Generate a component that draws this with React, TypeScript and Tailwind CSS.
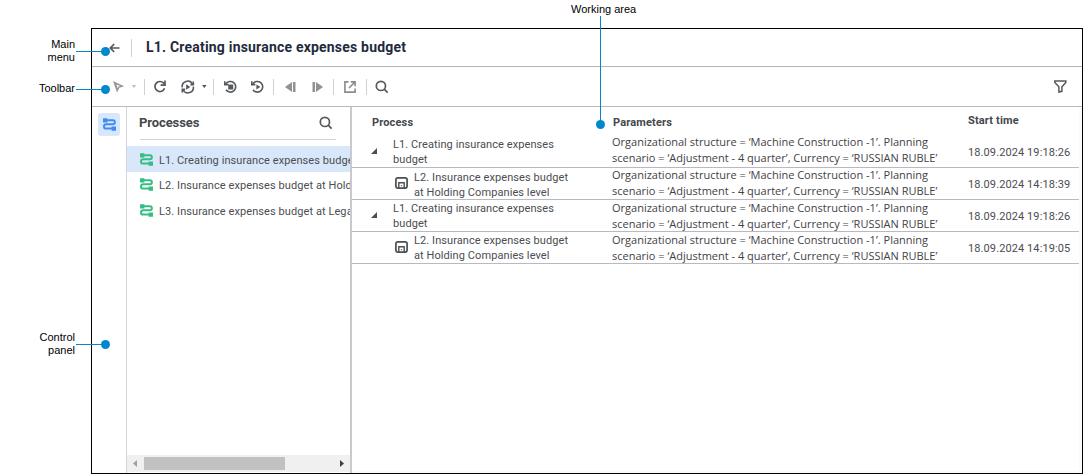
import React from "react";
import clsx from "clsx";

const PARAMS = [
  "Organizational structure = ‘Machine Construction -1’. Planning",
  "scenario = ‘Adjustment - 4 quarter’, Currency = ‘RUSSIAN RUBLE’",
];

const processes = [
  "L1. Creating insurance expenses budget",
  "L2. Insurance expenses budget at Holding Companies level",
  "L3. Insurance expenses budget at Legal Entities level",
];

const rows = [
  {
    lines: ["L1. Creating insurance expenses", "budget"],
    start: "18.09.2024 19:18:26",
    child: false,
    nameShift: "",
    paramShift: "-mt-[4px]",
  },
  {
    lines: ["L2. Insurance expenses budget", "at Holding Companies level"],
    start: "18.09.2024 14:18:39",
    child: true,
    nameShift: "mt-[2px]",
    paramShift: "-mt-[2px]",
  },
  {
    lines: ["L1. Creating insurance expenses", "budget"],
    start: "18.09.2024 19:18:26",
    child: false,
    nameShift: "",
    paramShift: "",
  },
  {
    lines: ["L2. Insurance expenses budget", "at Holding Companies level"],
    start: "18.09.2024 14:19:05",
    child: true,
    nameShift: "",
    paramShift: "",
  },
];

const SearchIcon = () => (
  <svg width="14" height="14" viewBox="0 0 14 14" fill="none" stroke="#55585c" strokeWidth="1.7">
    <circle cx="5.9" cy="5.9" r="4.6" />
    <path d="M9.2 9.2 12.6 12.6" />
  </svg>
);

const FlowIcon = ({ className }: { className?: string }) => (
  <svg className={className} width="13" height="13" viewBox="0 0 13 13" fill="none">
    <path d="M0 0.2h4.4v4.2H0zM8.6 8.6H13v4.2H8.6z" fill="currentColor" />
    <path
      d="M4 2.3h5.9a1.9 1.9 0 0 1 0 3.9H3.2a2.2 2.2 0 0 0 0 4.4H9"
      stroke="currentColor"
      strokeWidth="2"
    />
  </svg>
);

const ProcessItemIcon = () => (
  <svg className="mb-[2px] shrink-0" width="13" height="12" viewBox="0 0 13 12" fill="none" stroke="#4c4f52" strokeWidth="1.7">
    <rect x="0.9" y="0.9" width="11.2" height="10.2" rx="2" />
    <path d="M3.8 11V5.7h5.4V11" strokeWidth="1.4" />
    <path d="M5.9 8.7h1.2" strokeWidth="1" />
  </svg>
);

const Separator = () => <div className="h-4 w-px shrink-0 bg-[#cfd1d8]" />;

const Toolbar = () => (
  <div className="flex h-10 shrink-0 items-center border-b border-[#b9bac0] text-[#55585c]">
    <svg className="ml-[21px]" width="12" height="12" viewBox="0 0 12 12" fill="#96989c">
      <path fillRule="evenodd" d="M0 0 11.3 5.2 6.4 6.7 4 11.5zM3.6 3.6l1 3.6 .9-1.8 1.8-.5z" />
    </svg>
    <svg className="ml-[7px]" width="4" height="3" viewBox="0 0 4 3" fill="#b8babd">
      <path d="M0 0h4L2 3z" />
    </svg>
    <div className="ml-[8px] flex items-center">
      <Separator />
      <svg className="ml-[8px]" width="14" height="13" viewBox="0 0 14 13" fill="none" stroke="currentColor" strokeWidth="1.7">
        <path d="M11.6 8.3A5 5 0 1 1 10.6 3.1L11.4 4" />
        <path d="M12 .6v4.6H7.6" />
      </svg>
      <svg className="ml-[14px]" width="14" height="14" viewBox="0 0 14 14" fill="none" stroke="currentColor" strokeWidth="1.6">
        <path d="M1.3 7.4A5.4 5.4 0 0 1 11.4 4M12.3 6.6A5.4 5.4 0 0 1 2.2 10" />
        <path d="M12.3 1.6v3H9.4M1.3 12.4v-3h2.9" />
        <path d="M5.2 4.3 9.3 7l-4.1 2.7z" fill="currentColor" stroke="none" />
      </svg>
      <svg className="ml-[7px]" width="5" height="3" viewBox="0 0 5 3" fill="currentColor">
        <path d="M0 0h4.6L2.3 3z" />
      </svg>
      <div className="ml-[6px]">
        <Separator />
      </div>
      <svg className="ml-[10px]" width="14" height="14" viewBox="0 0 14 14" fill="none" stroke="currentColor" strokeWidth="1.6">
        <path d="M1.8 4.2A5.3 5.3 0 1 1 2 9.7" />
        <path d="M.8 1.2v3.4h3.6" />
        <path d="M4.2 4.5h5v5h-5z" fill="currentColor" stroke="none" />
      </svg>
      <svg className="ml-[13px]" width="14" height="14" viewBox="0 0 14 14" fill="none" stroke="currentColor" strokeWidth="1.6">
        <path d="M1.8 4.2A5.3 5.3 0 1 1 2 9.7" />
        <path d="M.8 1.2v3.4h3.6" />
        <path d="M5.4 4.4 9.4 7l-4 2.6z" fill="currentColor" stroke="none" />
      </svg>
      <div className="ml-[8px]">
        <Separator />
      </div>
      <svg className="ml-[11px]" width="11" height="10" viewBox="0 0 11 10" fill="#8f9195">
        <path d="M7 0v10L0 5z" />
        <path d="M8 0h2.5v10H8z" />
      </svg>
      <svg className="ml-[16px]" width="11" height="10" viewBox="0 0 11 10" fill="#8f9195">
        <path d="M4 0v10l7-5z" />
        <path d="M.5 0H3v10H.5z" />
      </svg>
      <div className="ml-[10px]">
        <Separator />
      </div>
      <svg className="ml-[10px]" width="12" height="12" viewBox="0 0 12 12" fill="none" stroke="#8a8c90" strokeWidth="1.6">
        <path d="M4.5.9H.9v10.2h10.2V7.5M6.8.9h4.3v4.3M11 1 5 7" />
      </svg>
      <div className="ml-[10px]">
        <Separator />
      </div>
      <div className="ml-[8px]">
        <SearchIcon />
      </div>
    </div>
    <svg className="mr-[15px] ml-auto" width="13" height="13" viewBox="0 0 13 13" fill="none" stroke="currentColor" strokeWidth="1.5">
      <path d="M.8 1h11v1.4L7.9 6.8v4.5l-3 .7V6.8L.8 2.4z" />
    </svg>
  </div>
);

const ProcessPanel = () => (
  <div className="flex w-[225px] shrink-0 flex-col border-r-2 border-[#c9cad0]">
    <div className="mr-[14px] ml-[13px] flex h-[33px] items-center justify-between border-b border-[#d0d1d9] pr-[3px]">
      <h2 className="-ml-px text-[13px] font-bold tracking-[-0.1px] text-[#44474b]">Processes</h2>
      <SearchIcon />
    </div>
    <div className="mt-[6px] flex flex-col">
      {processes.map((el, i) => (
        <div
          key={el}
          className={clsx("flex h-[26px] items-center overflow-hidden pl-[13px]", i === 0 && "bg-[#d9e7fb] pt-[2px]")}
        >
          <FlowIcon className="mb-[2px] shrink-0 text-[#35bd82]" />
          <span className="ml-[6px] text-[11px] leading-[15px] tracking-[0.08px] whitespace-nowrap text-[#4a4d51]">{el}</span>
        </div>
      ))}
    </div>
    <div className="mt-auto mb-px flex h-[17px] items-center bg-[#f0f0f0]">
      <svg className="ml-[6px]" width="4" height="7" viewBox="0 0 4 7" fill="#a0a0a0">
        <path d="M4 0v7L0 3.5z" />
      </svg>
      <div className="ml-[7px] h-[13px] w-[141px] bg-[#c1c1c1]" />
      <svg className="mr-[6px] ml-auto" width="4" height="7" viewBox="0 0 4 7" fill="#404040">
        <path d="M0 0v7l4-3.5z" />
      </svg>
    </div>
  </div>
);

const WorkingArea = () => (
  <div className="flex min-w-0 flex-1 flex-col border-r-[3px] border-b-2 border-[#fafafa]">
    <div className="flex h-[29px] shrink-0 text-[11px] leading-[14px] font-bold tracking-[0.15px] text-[#44474b]">
      <span className="w-[242px] pt-[9px] pl-[20px]">Process</span>
      <span className="w-[354px] pt-[9px] pl-[19px]">Parameters</span>
      <span className="pt-[7px] pl-[20px]">Start time</span>
    </div>
    {rows.map((el, i) => (
      <div key={i} className="flex h-[32px] shrink-0 items-center border-b border-[#b9bac0] text-[#4a4d51]">
        <div className={clsx("flex w-[260px] shrink-0 items-center", el.child ? "pl-[43px]" : "pl-[19px]")}>
          {el.child ? (
            <ProcessItemIcon />
          ) : (
            <svg className="mr-[10px] mb-[2px]" width="6" height="6" viewBox="0 0 6 6" fill="#4a4d51">
              <path d="M6 0v6H0z" />
            </svg>
          )}
          <div className={clsx("ml-[6px] text-[11px] leading-[15px] tracking-[0.08px] whitespace-nowrap", el.nameShift)}>
            {el.lines.map((line, j) => (
              <div key={line} className={clsx(!el.child && j === 0 && "mb-[2px] h-[13px] overflow-hidden")}>
                {line}
              </div>
            ))}
          </div>
        </div>
        <div
          className={clsx(
            "w-[356px] shrink-0 font-['Open_Sans',sans-serif] text-[11px] leading-[16px] whitespace-nowrap text-[#3f4246]",
            el.paramShift
          )}
        >
          {PARAMS.map((line) => (
            <div key={line}>{line}</div>
          ))}
        </div>
        <span className="mt-[3px] text-[11px] tracking-[0.1px] whitespace-nowrap">{el.start}</span>
      </div>
    ))}
  </div>
);

const Callout = ({ className, label }: { className: string; label: string }) => (
  <div className={clsx("absolute left-0 flex w-[110px] items-center", className)}>
    <span className="w-[75px] self-start text-right leading-[13px] whitespace-pre-line">{label}</span>
    <span className="ml-px h-px flex-1 bg-[#0088cf]" />
    <span className="-ml-px h-[9px] w-[9px] rounded-full bg-[#0088cf]" />
  </div>
);

export default function App() {
  return (
    <div className="relative h-[474px] w-[1083px] overflow-hidden bg-white pt-[28px] pl-[91px] font-['Roboto',sans-serif]">
      <div className="flex h-[446px] w-[992px] flex-col border border-black">
        <div className="flex h-[38px] shrink-0 items-center border-b border-[#b2b3bd]">
          <svg className="ml-[17px]" width="11" height="10" viewBox="0 0 11 10" fill="none" stroke="#55585c" strokeWidth="1.7">
            <path d="M10.5 5H1.6M5.2 1 1.3 5l3.9 4" />
          </svg>
          <div className="ml-[11px] h-[18px] w-px bg-[#cfd1d8]" />
          <h1 className="ml-[14px] text-[14px] font-bold tracking-[0.2px] text-[#1f2b3d]">
            L1. Creating insurance expenses budget
          </h1>
        </div>
        <Toolbar />
        <div className="flex min-h-0 flex-1">
          <div className="w-[35px] shrink-0 border-r border-[#d3d4dc] pt-[6px] pl-[6px]">
            <div className="flex h-[23px] w-[22px] items-center justify-center rounded-[3px] bg-[#d9e7fb]">
              <FlowIcon className="text-[#3f8cf4]" />
            </div>
          </div>
          <ProcessPanel />
          <WorkingArea />
        </div>
      </div>
      <div className="font-['Liberation_Sans',Arial,sans-serif] text-[11px] text-black">
        <Callout className="top-[38px]" label={"Main\nmenu"} />
        <Callout className="top-[82px] h-[15px]" label="Toolbar" />
        <Callout className="top-[331px]" label={"Control\npanel"} />
        <div className="absolute top-[3px] left-[571px] flex w-[66px] flex-col">
          <span className="leading-[13px] whitespace-nowrap">Working area</span>
          <span className="ml-[29px] h-[104px] w-px bg-[#0088cf]" />
          <span className="ml-[25px] h-[9px] w-[9px] rounded-full bg-[#0088cf]" />
        </div>
      </div>
    </div>
  );
}
